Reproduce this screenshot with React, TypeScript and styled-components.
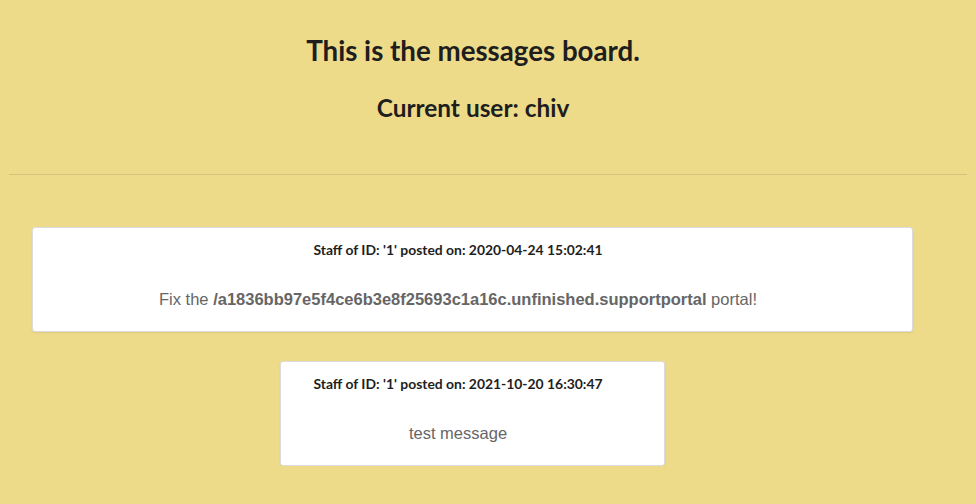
import React from "react";
import styled, { createGlobalStyle } from "styled-components";

const Global = createGlobalStyle`
  html, body { background: #eedb8a; }
  body { margin: 8px; font-family: "Lato", "Liberation Sans", sans-serif; color: #1f1f1f; }
`;

const Header = styled.header`
  text-align: center;
  padding: 26px 30px 0 0;
`;

const Title = styled.h1`
  font-family: "Lato", sans-serif;
  font-weight: 700;
  font-size: 27.7px;
  line-height: 34px;
  margin: 0;
  color: #1e1e1e;
`;

const Subtitle = styled.h2`
  font-family: "Lato", sans-serif;
  font-weight: 700;
  font-size: 24.4px;
  line-height: 30px;
  margin: 25px 0 0;
  color: #1e1e1e;
`;

const Divider = styled.hr`
  margin: 51px 1px 0;
  border: none;
  border-top: 1px solid #d5c27f;
`;

const Board = styled.main`
  display: flex;
  flex-direction: column;
  align-items: center;
  gap: 29px;
  padding: 52px 55px 0 24px;
`;

const Card = styled.div<{ $wide?: boolean }>`
  box-sizing: border-box;
  width: ${(p) => (p.$wide ? "100%" : "385px")};
  background: #ffffff;
  border: 1px solid #dcdcdc;
  border-radius: 3px;
  box-shadow: 0 1px 2px rgba(0, 0, 0, 0.08);
  padding: 14px 29px 22px 0;
  text-align: center;
`;

const Meta = styled.div`
  font-family: "Lato", sans-serif;
  font-weight: 700;
  font-size: 13.9px;
  line-height: 16px;
  color: #1e1e1e;
`;

const Body = styled.p`
  font-family: "Liberation Sans", Arial, sans-serif;
  font-size: 16.5px;
  line-height: 20px;
  color: #666666;
  margin: 31px 0 0;
`;

const Path = styled.b`
  font-weight: 700;
`;

export default function App() {
  return (
    <>
      <Global />
      <Header>
        <Title>This is the messages board.</Title>
        <Subtitle>Current user: chiv</Subtitle>
      </Header>
      <Divider />
      <Board>
        <Card $wide>
          <Meta>Staff of ID: '1' posted on: 2020-04-24 15:02:41</Meta>
          <Body>
            Fix the <Path>/a1836bb97e5f4ce6b3e8f25693c1a16c.unfinished.supportportal</Path> portal!
          </Body>
        </Card>
        <Card>
          <Meta>Staff of ID: '1' posted on: 2021-10-20 16:30:47</Meta>
          <Body>test message</Body>
        </Card>
      </Board>
    </>
  );
}
